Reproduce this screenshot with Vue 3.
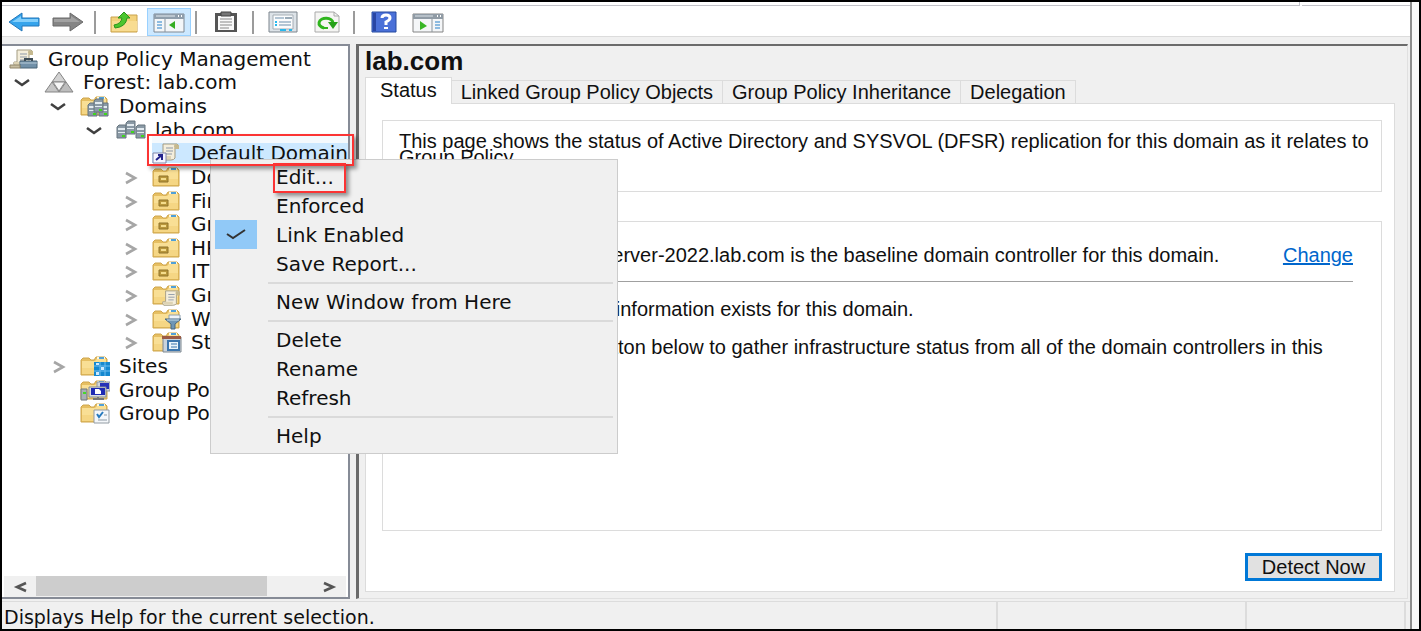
<script setup>
const folder =
  '<path d="M1 5 3 3H9L11 5H14L16 2H25L27 4V20H1Z" fill="#e6bf62" stroke="#cfa64c"/><path d="M2 6H15L17 4H26V19H2Z" fill="#f9df95"/><path d="M2 13H26V19H2Z" fill="#f2d07a" opacity=".6"/><path d="M17 3H25" stroke="#fff7dc" stroke-width="2"/><path d="M19 3H24" stroke="#4fa0d8" stroke-width="2"/>'

const server = (x, y) =>
  `<g transform="translate(${x} ${y})"><path d="M0 2 2 0H9V13H0Z" fill="#8b9aa6" stroke="#66757f"/><path d="M1 3H8V5H1ZM1 7H8V8H1Z" fill="#e3ebf0"/><path d="M5 10H8V12H5Z" fill="#3fd61c"/></g>`

const scroll = (x, y) =>
  `<g transform="translate(${x} ${y})"><path d="M4 1H18Q20 2 19 5H16V15Q15 17 12 17H2Q0 15 1 13H4Z" fill="#f4eedb" stroke="#a39c83"/><path d="M7 5H14M7 8H14M7 11H13" stroke="#8d99a8"/><path d="M16 1Q14 3 16 6H20V2Z" fill="#c5b98f"/><path d="M1 13H12V16H2Z" fill="#ddd3b4"/></g>`

const icons = {
  console:
    scroll(4, 1) +
    '<path d="M11 13H28V20H11Z" fill="#7190a8" stroke="#4b6577"/><path d="M16 13V11H23V13" fill="none" stroke="#3c4b55" stroke-width="2"/><path d="M11 15H28" stroke="#b9ccd9"/><path d="M1 17H11V20H1Z" fill="#c7bea2" stroke="#91866b"/>',
  forest:
    '<g stroke="#858585" stroke-linejoin="round"><path d="M15 1 22 11H8Z" fill="#d2d2d2"/><path d="M8 11 15 21H1Z" fill="#c6c6c6"/><path d="M22 11 29 21H15Z" fill="#bdbdbd"/><path d="M9 11H21L15 20Z" fill="#f6f6f6"/></g>',
  domains: folder + server(8, 8) + server(19, 8) + server(14, 4),
  domain: server(1, 6) + server(20, 6) + server(10, 2),
  link:
    scroll(7, 1) +
    '<path d="M1 11H14V21H1Z" fill="#f5f5ff" stroke="#8087a8"/><path d="M4 18 10 13M6 13H10V18" fill="none" stroke="#25258c" stroke-width="2"/>',
  ou: folder + '<path d="M7 10H16V16H7Z" fill="#b9973d" stroke="#8f732a"/><path d="M9 12H14V14H9Z" fill="#f4dc8c"/>',
  gpos: folder + '<g transform="translate(10 6) scale(.9)">' + scroll(0, 0) + '</g>',
  wmi: folder + '<path d="M17 7H28V12H17Z" fill="#eef3f7" stroke="#8fa0ad"/><path d="M13 11H29L23 16V21H19V16Z" fill="#6f96b5" stroke="#486983"/><path d="M15 12H27" stroke="#c8dbe8"/>',
  starter: folder + '<path d="M11 6H29V21H11Z" fill="#c9d3dc" stroke="#7d8790"/><path d="M10 5H29V8H10Z" fill="#9a5b45"/><path d="M16 10H27V19H16Z" fill="#eaf4fb" stroke="#3b75ad" stroke-width="2"/><path d="M19 13H25M19 16H25" stroke="#3b75ad"/>',
  sites: folder + '<path d="M14 7H30V21H14Z" fill="#1588cf"/><path d="M14 11H30M14 16H30M20 7V21M25 7V21" stroke="#6fbdf0"/><path d="M16 8H19V10H16ZM21 12H24V15H21ZM16 17H19V20H16Z" fill="#cdeaff"/>',
  modeling:
    folder +
    '<path d="M17 3H30V12H17Z" fill="#d3d7dd" stroke="#8f979f"/><path d="M20 4H29V10H20Z" fill="#2632b8"/><path d="M9 8H26V18H9Z" fill="#d9dde2" stroke="#838b94"/><path d="M11 9H25V16H11Z" fill="#1f2bb4"/><path d="M15 10H19L21 12V15H15Z" fill="#fff"/><path d="M13 20H24M18 18V20" stroke="#777" stroke-width="2"/><path d="M1 10H7V21H1Z" fill="#a9b0b5" stroke="#6f777c"/><path d="M3 13H6V15H3Z" fill="#46d927"/>',
  results:
    folder + '<path d="M14 8H29V21H14Z" fill="#f4f7fa" stroke="#929ba3"/><path d="M17 12 19 15 23 10" fill="none" stroke="#2679bd" stroke-width="2"/><path d="M24 13H27M18 18H27" stroke="#8d99a3"/>',
}

const tools = {
  back: '<path d="M1 12 14 3V8H31V16H14V21Z" fill="#35a4ec" stroke="#2377ba" stroke-linejoin="round"/><path d="M4 12 13 6V9H30V12Z" fill="#83cffb"/>',
  forward: '<path d="M31 12 18 3V8H1V16H18V21Z" fill="#858585" stroke="#6b6b6b" stroke-linejoin="round"/><path d="M28 12 19 6V9H2V12Z" fill="#a2a2a2"/>',
  up: '<path d="M2 7H13L15 5H28V22H2Z" fill="#f3d27c" stroke="#c9a24c"/><path d="M3 11H28V21H3Z" fill="#f8dc91"/><path d="M5 15Q12 14 13 8L9 8 15 2 21 8H18Q17 17 6 18Z" fill="#4cc52d" stroke="#2b951c"/>',
  tree: '<path d="M1 4H31V22H1Z" fill="#f4f6f8" stroke="#7e8994"/><path d="M1 4H31V9H1Z" fill="#8f9eac"/><path d="M3 6H22" stroke="#e6edf3"/><path d="M25 6H26M28 6H29" stroke="#fff" stroke-width="2"/><path d="M12 9V22" stroke="#8895a1"/><path d="M4 12H9M4 15H9M4 18H9" stroke="#2680c9"/><path d="M22 11V19L16 15Z" fill="#35ad21"/>',
  clipboard: '<path d="M5 3H27V22H5Z" fill="#555"/><path d="M8 6H24V20H8Z" fill="#fafafa"/><path d="M11 2H21V6H11Z" fill="#777" stroke="#444"/><path d="M10 9H22M10 12H22M10 15H22M10 18H19" stroke="#888"/>',
  properties: '<path d="M2 2H30V22H2Z" fill="#dde3e8" stroke="#7c858d"/><path d="M6 5H26V19H6Z" fill="#fbfcfd" stroke="#a4adb5"/><path d="M8 8H17M12 12H24M12 15H24" stroke="#6c8fac"/><path d="M8 12H10M8 15H10" stroke="#28b8ed" stroke-width="2"/><path d="M18 8H25" stroke="#9aabb8" stroke-width="2"/><path d="M13 20H19M22 20H25" stroke="#28b8ed" stroke-width="2"/>',
  refresh: '<path d="M4 2H23L28 6V22H4Z" fill="#f5f5f3" stroke="#aaa"/><path d="M23 2V6H28" fill="none" stroke="#aaa"/><path d="M13 18A7 5 0 1 1 22 13" fill="none" stroke="#2fb51d" stroke-width="3"/><path d="M17 12H27L22 19Z" fill="#27a119"/><path d="M12 18H17" stroke="#2fb51d" stroke-width="2"/>',
  help: '<path d="M4 2H28V22H4Z" fill="#4a70d8" stroke="#274a9f"/><path d="M5 3H8V21H5Z" fill="#2946a4"/><path d="M14 8Q14 5 18 5T22 8Q22 10 18 12V15" fill="none" stroke="#fff" stroke-width="3"/><path d="M16 17H20V19H16Z" fill="#fff"/>',
  action: '<path d="M1 4H31V22H1Z" fill="#f4f6f8" stroke="#858585"/><path d="M1 4H31V9H1Z" fill="#909ba5"/><path d="M3 6H21" stroke="#dce4ea"/><path d="M25 6H26M28 6H29" stroke="#fff" stroke-width="2"/><path d="M20 9V22" stroke="#8c959c"/><path d="M8 11V20L15 16Z" fill="#38b625"/><path d="M23 12H28M23 15H28M23 18H28" stroke="#2680c9"/>',
}

const toolbar = [
  { id: 'back', label: 'Back' },
  { id: 'forward', label: 'Forward' },
  null,
  { id: 'up', label: 'Up one level' },
  { id: 'tree', label: 'Show/Hide Console Tree', active: true },
  null,
  { id: 'clipboard', label: 'Paste' },
  null,
  { id: 'properties', label: 'Properties' },
  { id: 'refresh', label: 'Refresh' },
  null,
  { id: 'help', label: 'Help' },
  { id: 'action', label: 'Show/Hide Action Pane' },
]

const tree = [
  { depth: 0, icon: 'console', label: 'Group Policy Management' },
  { depth: 1, icon: 'forest', label: 'Forest: lab.com', state: 'open' },
  { depth: 2, icon: 'domains', label: 'Domains', state: 'open' },
  { depth: 3, icon: 'domain', label: 'lab.com', state: 'open' },
  { depth: 4, icon: 'link', label: 'Default Domain', selected: true },
  { depth: 4, icon: 'ou', label: 'Domain', state: 'closed' },
  { depth: 4, icon: 'ou', label: 'Finance', state: 'closed' },
  { depth: 4, icon: 'ou', label: 'Groups', state: 'closed' },
  { depth: 4, icon: 'ou', label: 'HR', state: 'closed' },
  { depth: 4, icon: 'ou', label: 'IT', state: 'closed' },
  { depth: 4, icon: 'gpos', label: 'Group', state: 'closed' },
  { depth: 4, icon: 'wmi', label: 'WMI', state: 'closed' },
  { depth: 4, icon: 'starter', label: 'Starter', state: 'closed' },
  { depth: 2, icon: 'sites', label: 'Sites', state: 'closed' },
  { depth: 2, icon: 'modeling', label: 'Group Policy' },
  { depth: 2, icon: 'results', label: 'Group Policy' },
]

const indent = (row) => ({ paddingLeft: (row.depth ? row.depth * 36 - 24 : 7) + 'px' })

const tabs = ['Status', 'Linked Group Policy Objects', 'Group Policy Inheritance', 'Delegation']

const menu = [
  { label: 'Edit...' },
  { label: 'Enforced' },
  { label: 'Link Enabled', checked: true },
  { label: 'Save Report...' },
  null,
  { label: 'New Window from Here' },
  null,
  { label: 'Delete' },
  { label: 'Rename' },
  { label: 'Refresh' },
  null,
  { label: 'Help' },
]
</script>

<template>
  <div class="window">
    <div class="frame">
      <div class="menubar"><span></span><span></span></div>

      <div class="toolbar" role="toolbar" aria-label="Console">
        <template v-for="(t, i) in toolbar" :key="i">
          <button v-if="t" type="button" class="tool" :class="{ active: t.active }" :aria-label="t.label">
            <svg width="32" height="24" viewBox="0 0 32 24" v-html="tools[t.id]"></svg>
          </button>
          <span v-else class="tool-sep"></span>
        </template>
      </div>

      <main class="content">
        <nav class="sidebar" aria-label="Console tree">
          <ul class="tree" role="tree">
            <li
              v-for="(row, i) in tree"
              :key="i"
              class="row"
              role="treeitem"
              :aria-selected="!!row.selected"
              :style="indent(row)"
            >
              <span v-if="row.depth" class="toggle">
                <svg v-if="row.state === 'open'" width="16" height="16" viewBox="0 0 16 16">
                  <path d="M1 6 8 11 15 6" fill="none" stroke="#404040" stroke-width="2.6" />
                </svg>
                <svg v-else-if="row.state === 'closed'" width="16" height="16" viewBox="0 0 16 16">
                  <path d="M4 4 13 9 4 14" fill="none" stroke="#a6a6a6" stroke-width="2.6" />
                </svg>
              </span>
              <span class="node" :class="{ selected: row.selected }">
                <svg class="node-icon" width="30" height="22" viewBox="0 0 30 22" v-html="icons[row.icon]"></svg>
                <span>{{ row.label }}</span>
              </span>
            </li>
          </ul>
          <div class="hscroll">
            <button type="button" aria-label="Scroll left">
              <svg width="14" height="12" viewBox="0 0 14 12"><path d="M13 2 4 6 13 10" fill="none" stroke="#555" stroke-width="2.6" /></svg>
            </button>
            <div class="track"><div class="thumb"></div></div>
            <button type="button" aria-label="Scroll right">
              <svg width="14" height="12" viewBox="0 0 14 12"><path d="M1 2 10 6 1 10" fill="none" stroke="#555" stroke-width="2.6" /></svg>
            </button>
          </div>
        </nav>

        <section class="details">
          <h1>lab.com</h1>
          <div class="tabs" role="tablist">
            <button
              v-for="(tab, i) in tabs"
              :key="tab"
              type="button"
              role="tab"
              class="tab"
              :class="{ current: i === 0 }"
              :aria-selected="i === 0"
            >{{ tab }}</button>
          </div>
          <div class="page" role="tabpanel">
            <div class="group intro">
              <p>This page shows the status of Active Directory and SYSVOL (DFSR) replication for this domain as it relates to Group Policy.</p>
            </div>
            <div class="group status">
              <div class="baseline">
                <p>Server-2022.lab.com is the baseline domain controller for this domain.</p>
                <a href="#">Change</a>
              </div>
              <p>No Infrastructure Status information exists for this domain.</p>
              <p>Click the Detect Now button below to gather infrastructure status from all of the domain controllers in this domain.</p>
            </div>
            <div class="actions"><button type="button" class="detect">Detect Now</button></div>
          </div>
        </section>
      </main>

      <footer class="statusbar">
        <span class="message">Displays Help for the current selection.</span>
        <span class="cell"></span>
        <span class="cell small"></span>
      </footer>
    </div>

    <div class="context" role="menu">
      <template v-for="(m, i) in menu" :key="i">
        <button v-if="m" type="button" class="item" :role="m.checked ? 'menuitemcheckbox' : 'menuitem'">
          <span class="mark" :class="{ checked: m.checked }">
            <svg v-if="m.checked" width="20" height="12" viewBox="0 0 20 12">
              <path d="M1 5 7 9 19 1" fill="none" stroke="#333" stroke-width="2" />
            </svg>
          </span>
          <span>{{ m.label }}</span>
        </button>
        <div v-else class="menu-sep" role="separator"></div>
      </template>
    </div>
    <div class="callout node-callout"></div>
    <div class="callout edit-callout"></div>
  </div>
</template>

<style>
body {
  margin: 0;
}
</style>

<style scoped>
* {
  box-sizing: border-box;
}
.window {
  position: relative;
  height: 100vh;
  min-height: 600px;
  padding-right: 7px;
  border: 2px solid #000;
  background: #f8f8f8;
  overflow: hidden;
  color: #101010;
  font: 20px/24px "DejaVu Sans", sans-serif;
}
button {
  font: inherit;
  color: inherit;
  border: 0;
  padding: 0;
  background: none;
}
svg {
  display: block;
  flex: none;
}
.frame {
  display: flex;
  flex-direction: column;
  height: 100%;
  border-right: 2px solid #8c8c8c;
  background: #f0f0f0;
}
.menubar {
  display: flex;
  gap: 2px;
  height: 4px;
  background: #fff;
}
.menubar span {
  flex: 1;
  border-bottom: 1px solid #c2c2c9;
}
.menubar span:first-child {
  border-right: 1px solid #c2c2c9;
}
.menubar span:last-child {
  flex: 0 0 108px;
}
.toolbar {
  display: flex;
  align-items: center;
  height: 31px;
  padding-top: 2px;
  background: #fff;
  border-bottom: 1px solid #dcdcdc;
}
.tool {
  display: flex;
  align-items: center;
  justify-content: center;
  width: 44px;
  height: 28px;
}
.tool.active {
  background: #cce8ff;
  border: 1px solid #99d1ff;
}
.tool-sep {
  width: 2px;
  height: 23px;
  margin: 0 7px 0 4px;
  background: #9b9b9b;
}
.content {
  display: flex;
  flex: 1;
  gap: 6px;
  min-height: 0;
  padding: 7px 2px 2px 0;
}
.sidebar {
  display: flex;
  flex-direction: column;
  flex: 0 0 348px;
  min-width: 0;
  border: solid #868b96;
  border-width: 2px 2px 2px 0;
  background: #fff;
  overflow: hidden;
}
.tree {
  display: grid;
  grid-template-rows: repeat(16, 1fr);
  grid-template-columns: minmax(0, 1fr);
  height: 378px;
  margin: 1px 0 auto;
  padding: 0;
  list-style: none;
  overflow: hidden;
}
.row {
  display: flex;
  align-items: center;
  min-height: 0;
  white-space: nowrap;
}
.toggle {
  flex: none;
  width: 30px;
}
.node {
  display: flex;
  align-items: center;
  gap: 9px;
  height: 20px;
}
.node.selected {
  flex: 1;
  background: #cce8ff;
  box-shadow: 0 -7px 0 #f4f9fd;
}
.hscroll {
  display: flex;
  flex: none;
  height: 21px;
  margin: 0 2px 0 2px;
  background: #f0f0f0;
}
.hscroll button {
  display: grid;
  place-items: center;
  width: 32px;
}
.track {
  flex: 1;
}
.thumb {
  width: 83%;
  height: 20px;
  background: #cdcdcd;
}
.details {
  display: flex;
  flex-direction: column;
  flex: 1;
  min-width: 0;
  padding: 0 12px 6px 6px;
  border: solid #6b6b6b;
  border-width: 2px 0 0 3px;
  border-right: 1px solid #e0e0e0;
  border-bottom: 1px solid #e0e0e0;
  font: 20px/16px "Liberation Sans", Arial, sans-serif;
}
h1 {
  margin: 0;
  font-size: 26px;
  line-height: 31px;
}
.tabs {
  display: flex;
  align-items: flex-end;
  height: 26px;
}
.tab {
  height: 23px;
  padding: 0 9px;
  border: 1px solid #dcdcdc;
  border-width: 1px 1px 0 0;
  white-space: nowrap;
}
.tab.current {
  position: relative;
  height: 27px;
  margin-bottom: -1px;
  padding: 0 14px 2px;
  border-left-width: 1px;
  background: #fff;
}
.page {
  display: flex;
  flex-direction: column;
  flex: 1;
  padding: 16px 12px 10px 16px;
  border: 1px solid #dcdcdc;
  background: #fff;
}
p {
  margin: 0;
}
.group {
  border: 1px solid #dcdcdc;
}
.intro {
  height: 72px;
  padding: 12px 10px 12px 16px;
}
.status {
  flex: 1;
  margin-top: 29px;
  padding: 16px 28px 16px 16px;
}
.status p + p {
  margin-top: 22px;
}
.baseline {
  display: flex;
  justify-content: space-between;
  height: 44px;
  margin-bottom: 19px;
  padding: 9px 0 0 200px;
  border-bottom: 1px solid #a0a0a0;
  white-space: nowrap;
}
a {
  color: #0066cc;
}
.actions {
  display: flex;
  justify-content: flex-end;
  margin-top: 22px;
}
.detect {
  width: 137px;
  height: 28px;
  border: 3px solid #0078d7;
  background: #e1e1e1;
}
.statusbar {
  display: flex;
  height: 28px;
  padding-right: 4px;
  border-top: 1px solid #dcdcdc;
}
.message {
  flex: 1;
  padding: 3px 2px 0;
  font-size: 19px;
}
.cell {
  width: 249px;
  border-left: 2px solid #dcdcdc;
}
.cell.small {
  width: 161px;
  border-right: 2px solid #dcdcdc;
}
.context {
  position: absolute;
  left: 208px;
  top: 157px;
  width: 408px;
  padding: 2px 4px 3px;
  border: 1px solid #ccc;
  background: #f0f0f0;
}
.item {
  display: flex;
  align-items: center;
  gap: 19px;
  width: 100%;
  height: 29px;
  text-align: left;
}
.mark {
  display: grid;
  place-items: center;
  width: 42px;
  height: 29px;
}
.mark.checked {
  background: #91c9f7;
}
.menu-sep {
  height: 2px;
  margin: 4px 0 3px 53px;
  background: #dadada;
}
.callout {
  position: absolute;
  border: 2px solid #fb3434;
  box-shadow: 3px 3px 4px rgba(0, 0, 0, 0.4);
}
.node-callout {
  left: 145px;
  top: 132px;
  width: 207px;
  height: 32px;
}
.edit-callout {
  left: 271px;
  top: 161px;
  width: 73px;
  height: 30px;
}
</style>
